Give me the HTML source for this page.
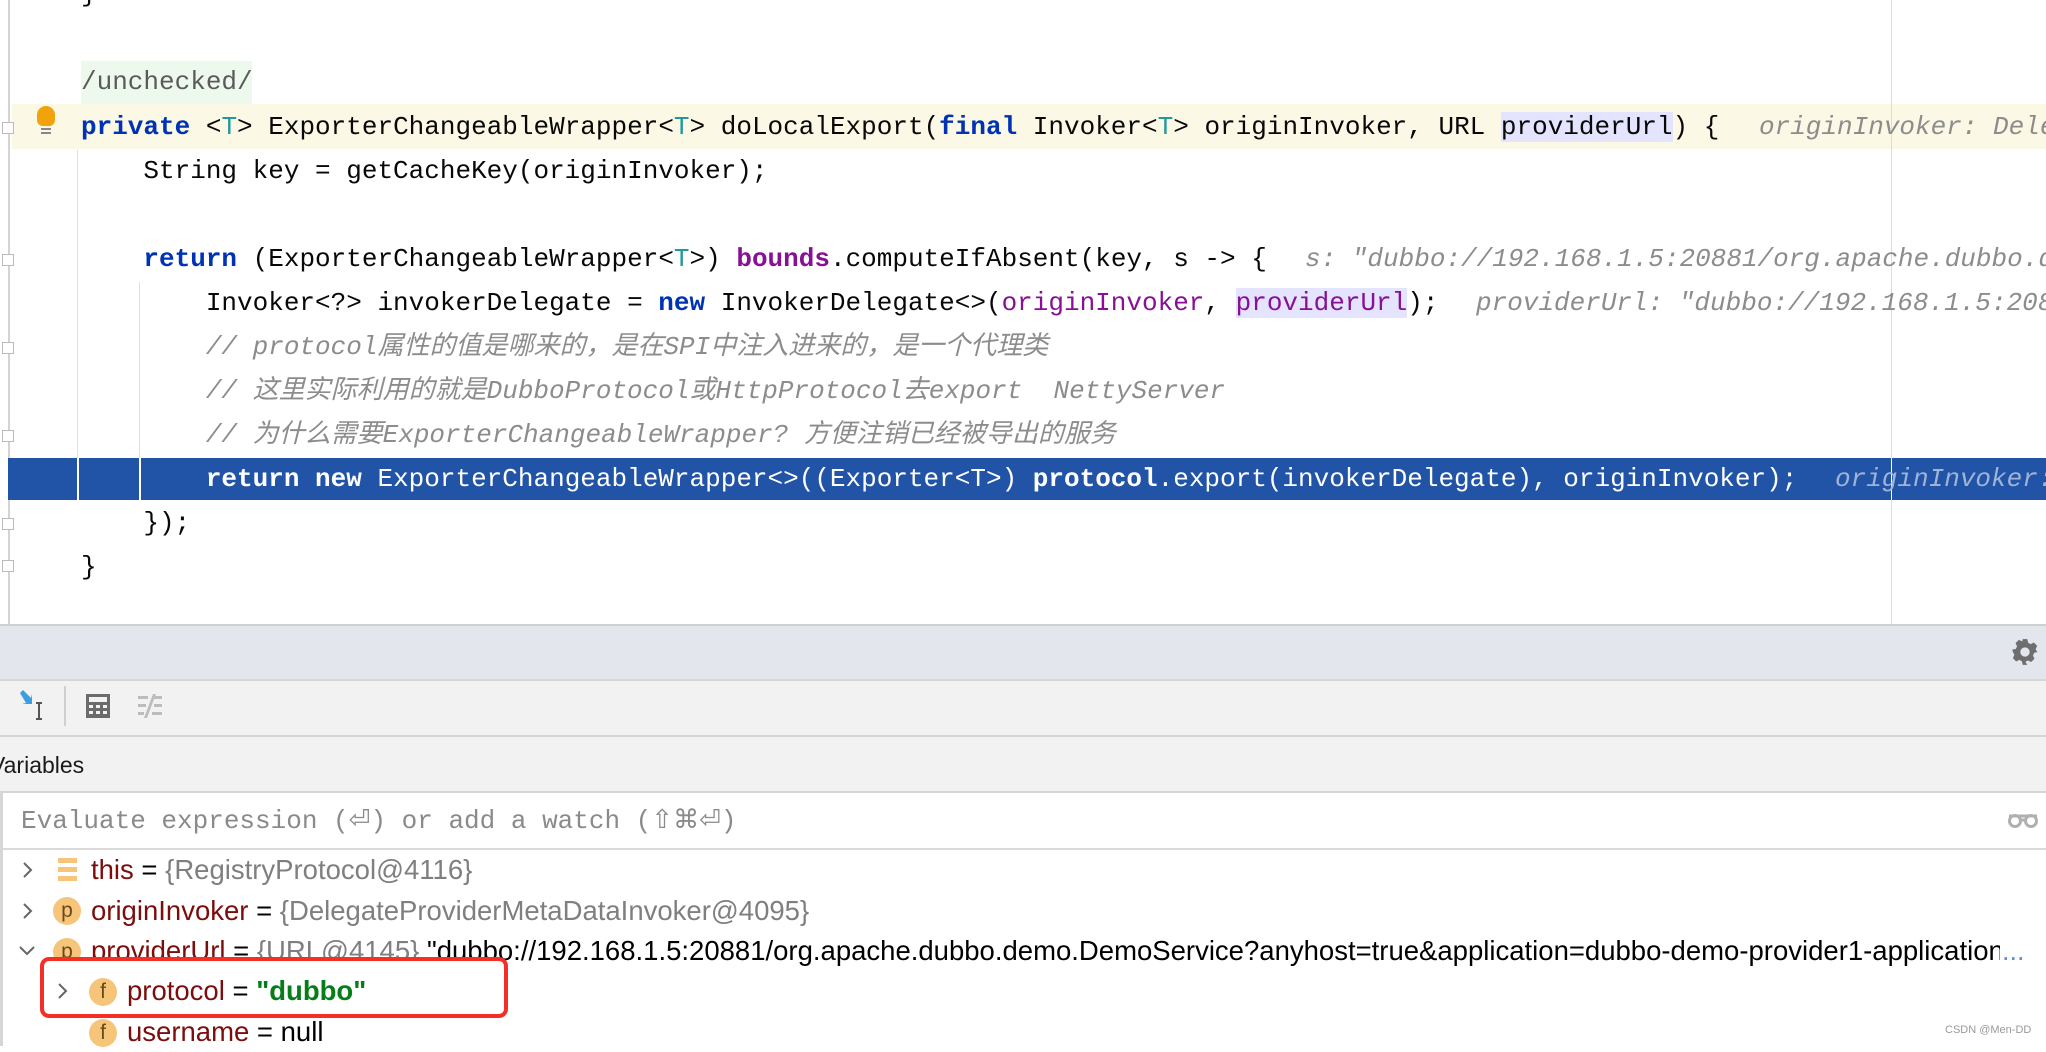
<!DOCTYPE html>
<html><head><meta charset="utf-8">
<style>
*{margin:0;padding:0;box-sizing:border-box}
body{width:2046px;height:1046px;overflow:hidden;background:#fff;position:relative;font-family:"Liberation Sans","Noto Sans CJK SC",sans-serif}
.ed{position:absolute;left:0;top:0;width:2046px;height:624px;background:#fff;overflow:hidden}
.ln{position:absolute;left:81px;height:44px;line-height:44px;font-family:"Liberation Mono","Noto Sans CJK SC",monospace;font-size:26px;white-space:pre;color:#080808}
.kw{color:#0033b3;font-weight:bold}
.tp{color:#20999d}
.fd{color:#871094;font-weight:bold}
.pu{color:#871094}
.cm{color:#8c8c8c;font-style:italic}
.hint{position:absolute;height:44px;line-height:44px;font-family:"Liberation Mono",monospace;font-size:26px;font-style:italic;color:#8c8c8c;white-space:pre}
.pm{background:#e4e4ff}
.v{position:absolute;left:0;font-size:27.5px;height:40px;line-height:40px;white-space:nowrap;overflow:hidden}
.nm{color:#7b0d0d}
.gv{color:#7f7f7f}
.ic{position:absolute;width:28px;height:28px;border-radius:14px;background:#f6c57a;color:#6b4a1a;font-size:21px;text-align:center;line-height:28px;font-family:"Liberation Sans",sans-serif}
.chev{position:absolute;width:14px;height:18px}
</style></head><body>
<div class="ed">
  <div style="position:absolute;left:8px;top:0;width:2px;height:624px;background:#d4d4d4"></div>
  <div style="position:absolute;left:12px;top:104px;width:2034px;height:45px;background:#fcf8e6"></div>
  <div style="position:absolute;left:81px;top:61px;width:171px;height:43px;background:#eef9ee"></div>
  <div style="position:absolute;left:1891px;top:0;width:1px;height:624px;background:#dcdcdc"></div>
  <div style="position:absolute;left:77px;top:150px;width:1px;height:320px;background:#e0e0e0"></div>
  <div style="position:absolute;left:139px;top:282px;width:1px;height:176px;background:#e0e0e0"></div>
  <div style="position:absolute;left:8px;top:458px;width:2038px;height:42px;background:#2154a6"></div>
  <div style="position:absolute;left:77px;top:458px;width:2px;height:42px;background:#fff"></div>
  <div style="position:absolute;left:139px;top:458px;width:2px;height:42px;background:#fff"></div>
  <div style="position:absolute;left:1891px;top:458px;width:1px;height:42px;background:#fff"></div>
  <div style="position:absolute;left:37px;top:106px;width:18px;height:20px;border-radius:9px 9px 6px 6px;background:#f0a30a"></div>
  <div style="position:absolute;left:41px;top:128px;width:10px;height:2px;background:#888"></div>
  <div style="position:absolute;left:41px;top:132px;width:10px;height:2px;background:#888"></div>
  <div style="position:absolute;left:2px;top:122px;width:12px;height:12px;border:1px solid #bbb;background:#fff"></div>
  <div style="position:absolute;left:2px;top:254px;width:12px;height:12px;border:1px solid #bbb;background:#fff"></div>
  <div style="position:absolute;left:2px;top:342px;width:12px;height:12px;border:1px solid #bbb;background:#fff"></div>
  <div style="position:absolute;left:2px;top:430px;width:12px;height:12px;border:1px solid #bbb;background:#fff"></div>
  <div style="position:absolute;left:2px;top:518px;width:12px;height:12px;border:1px solid #bbb;background:#fff"></div>
  <div style="position:absolute;left:2px;top:560px;width:12px;height:12px;border:1px solid #bbb;background:#fff"></div>

  <div class="ln" style="top:-28px">}</div>
  <div class="ln" style="top:60px;color:#5a5a5a">/unchecked/</div>
  <div class="ln" style="top:105px"><span class="kw">private</span> &lt;<span class="tp">T</span>&gt; ExporterChangeableWrapper&lt;<span class="tp">T</span>&gt; doLocalExport(<span class="kw">final</span> Invoker&lt;<span class="tp">T</span>&gt; originInvoker, URL <span class="pm">providerUrl</span>) {</div>
  <div class="hint" style="left:1759px;top:105px">originInvoker: DelegateProviderMetaDataInvoker</div>
  <div class="ln" style="top:149px">    String key = getCacheKey(originInvoker);</div>
  <div class="ln" style="top:237px">    <span class="kw">return</span> (ExporterChangeableWrapper&lt;<span class="tp">T</span>&gt;) <span class="fd">bounds</span>.computeIfAbsent(key, s -&gt; {</div>
  <div class="hint" style="left:1305px;top:237px">s: "dubbo://192.168.1.5:20881/org.apache.dubbo.demo"</div>
  <div class="ln" style="top:281px">        Invoker&lt;?&gt; invokerDelegate = <span class="kw">new</span> InvokerDelegate&lt;&gt;(<span class="pu">originInvoker</span>, <span class="pu pm">providerUrl</span>);</div>
  <div class="hint" style="left:1476px;top:281px">providerUrl: "dubbo://192.168.1.5:20881"</div>
  <div class="ln cm" style="top:325px">        // protocol属性的值是哪来的，是在SPI中注入进来的，是一个代理类</div>
  <div class="ln cm" style="top:369px">        // 这里实际利用的就是DubboProtocol或HttpProtocol去export  NettyServer</div>
  <div class="ln cm" style="top:413px">        // 为什么需要ExporterChangeableWrapper? 方便注销已经被导出的服务</div>
  <div class="ln" style="top:457px;color:#fff">        <b>return new</b> ExporterChangeableWrapper&lt;&gt;((Exporter&lt;T&gt;) <b>protocol</b>.export(invokerDelegate), originInvoker);</div>
  <div class="hint" style="left:1835px;top:457px;color:#9fb3d9">originInvoker: Dele</div>
  <div class="ln" style="top:501px">    });</div>
  <div class="ln" style="top:545px">}</div>
</div>
<div style="position:absolute;left:0;top:624px;width:2046px;height:2px;background:#d0d0d0"></div>
<div style="position:absolute;left:0;top:626px;width:2046px;height:53px;background:#e3e6ed"></div>
<svg style="position:absolute;left:2011px;top:638px" width="28" height="28" viewBox="0 0 24 24"><path fill="#6e6e6e" d="M10 1h4l.6 3 2.2 1.2 2.8-1.3 2.8 2.8-1.3 2.8L22.3 11.7 23 12v0l-3 .6-1.2 2.4 1.3 2.8-2.8 2.8-2.8-1.3-2.2 1.2L14 23h-4l-.6-3-2.2-1.2-2.8 1.3-2.8-2.8 1.3-2.8L1.7 12 1 10l3-.6 1.2-2.2-1.3-2.8 2.8-2.8 2.8 1.3L9.4 4z"/><circle cx="12" cy="12" r="4" fill="#e3e6ed"/></svg>
<div style="position:absolute;left:0;top:679px;width:2046px;height:2px;background:#d6d6d6"></div>
<div style="position:absolute;left:0;top:681px;width:2046px;height:54px;background:#f2f2f2"></div>
<svg style="position:absolute;left:18px;top:690px" width="32" height="32" viewBox="0 0 32 32"><path fill="#3a9ee0" d="M2 3l3-3 8 8 1-4v10H4l4-1z"/><path stroke="#555" stroke-width="2" fill="none" d="M18 13h6M21 13v16M18 29h6"/></svg>
<div style="position:absolute;left:64px;top:686px;width:2px;height:40px;background:#cfcfcf"></div>
<svg style="position:absolute;left:86px;top:694px" width="24" height="24" viewBox="0 0 24 24"><rect width="24" height="24" fill="#6b6b6b"/><rect x="3" y="3" width="18" height="5" fill="#f2f2f2"/><g fill="#f2f2f2"><rect x="3" y="11" width="4" height="3"/><rect x="10" y="11" width="4" height="3"/><rect x="17" y="11" width="4" height="3"/><rect x="3" y="17" width="4" height="3"/><rect x="10" y="17" width="4" height="3"/><rect x="17" y="17" width="4" height="3"/></g></svg>
<svg style="position:absolute;left:138px;top:694px" width="24" height="24" viewBox="0 0 24 24"><g fill="#bdbdbd"><rect x="0" y="2" width="10" height="3"/><rect x="14" y="2" width="10" height="3"/><rect x="0" y="10" width="8" height="3"/><rect x="16" y="10" width="8" height="3"/><rect x="0" y="18" width="6" height="3"/><rect x="14" y="18" width="10" height="3"/><path d="M15 0h3L9 24H6z"/></g></svg>
<div style="position:absolute;left:0;top:735px;width:2046px;height:2px;background:#d6d6d6"></div>
<div style="position:absolute;left:0;top:737px;width:2046px;height:54px;background:#f2f2f2"></div>
<div style="position:absolute;left:-10px;top:745px;font-size:23px;line-height:40px;color:#1a1a1a">Variables</div>
<div style="position:absolute;left:0;top:791px;width:2046px;height:2px;background:#d6d6d6"></div>
<div style="position:absolute;left:0;top:793px;width:3px;height:253px;background:#d6d6d6"></div>
<div style="position:absolute;left:21px;top:801px;font-family:'Liberation Mono',monospace;font-size:26px;line-height:40px;color:#8a8a8a;white-space:pre">Evaluate expression (⏎) or add a watch (⇧⌘⏎)</div>
<svg style="position:absolute;left:2007px;top:812px" width="32" height="16" viewBox="0 0 32 16"><g fill="none" stroke="#b0b0b0" stroke-width="3"><circle cx="8" cy="9" r="5.5"/><circle cx="24" cy="9" r="5.5"/><path d="M2 4h28M13 8h6"/></g></svg>
<div style="position:absolute;left:3px;top:848px;width:2043px;height:2px;background:#dadada"></div>

<svg class="chev" style="left:21px;top:861px" viewBox="0 0 14 18"><path d="M3 2l7 7-7 7" fill="none" stroke="#666" stroke-width="2"/></svg>
<div style="position:absolute;left:58px;top:858px;width:19px;height:5px;background:#f6c57a"></div>
<div style="position:absolute;left:58px;top:867px;width:19px;height:5px;background:#f6c57a"></div>
<div style="position:absolute;left:58px;top:876px;width:19px;height:5px;background:#f6c57a"></div>
<div class="v" style="left:91px;top:850px"><span class="nm">this</span> = <span class="gv">{RegistryProtocol@4116}</span></div>

<svg class="chev" style="left:21px;top:902px" viewBox="0 0 14 18"><path d="M3 2l7 7-7 7" fill="none" stroke="#666" stroke-width="2"/></svg>
<div class="ic" style="left:53px;top:897px">p</div>
<div class="v" style="left:91px;top:891px"><span class="nm">originInvoker</span> = <span class="gv">{DelegateProviderMetaDataInvoker@4095}</span></div>

<svg style="position:absolute;left:18px;top:944px" width="18" height="14" viewBox="0 0 18 14"><path d="M2 3l7 7 7-7" fill="none" stroke="#666" stroke-width="2"/></svg>
<div class="ic" style="left:53px;top:938px">p</div>
<div class="v" style="left:91px;top:931px;width:1930px"><span class="nm">providerUrl</span> = <span class="gv">{URL@4145}</span> "dubbo://192.168.1.5:20881/org.apache.dubbo.demo.DemoService?anyhost=true&amp;application=dubbo-demo-provider1-application</div>
<div style="position:absolute;left:2000px;top:931px;height:40px;line-height:40px;font-size:27px;color:#5a8fd6;background:#fff;padding-left:2px">...</div>

<div style="position:absolute;left:40px;top:957px;width:468px;height:61px;background:#fff;border:4px solid #f42f25;border-radius:9px"></div>
<svg class="chev" style="left:56px;top:982px" viewBox="0 0 14 18"><path d="M3 2l7 7-7 7" fill="none" stroke="#666" stroke-width="2"/></svg>
<div class="ic" style="left:89px;top:978px">f</div>
<div class="v" style="left:127px;top:971px"><span class="nm">protocol</span> = <b style="color:#067d17">"dubbo"</b></div>

<div class="ic" style="left:89px;top:1019px">f</div>
<div class="v" style="left:127px;top:1012px"><span class="nm">username</span> = null</div>
<div style="position:absolute;left:1945px;top:1024px;font-size:11px;color:#999">CSDN @Men-DD</div>
</body></html>
